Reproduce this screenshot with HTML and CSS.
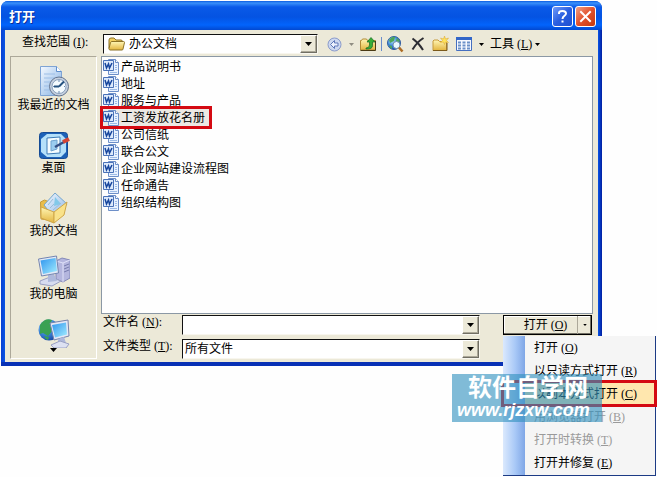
FILE: index.html
```
<!DOCTYPE html>
<html lang="zh-CN">
<head>
    <meta charset="UTF-8">
    <title>打开</title>
    <link rel="stylesheet" href="styles.css">
</head>
<body>
    <svg class="defs" aria-hidden="true">
        <defs>
            <linearGradient id="paper" x1="0" y1="0" x2="1" y2="1">
                <stop offset="0" stop-color="#f4f9ff"/>
                <stop offset="1" stop-color="#86b2e4"/>
            </linearGradient>
            <linearGradient id="screen" x1="0" y1="0" x2="1" y2="1">
                <stop offset="0" stop-color="#2f95ee"/>
                <stop offset="1" stop-color="#a4edff"/>
            </linearGradient>
            <linearGradient id="gold" x1="0" y1="0" x2="0" y2="1">
                <stop offset="0" stop-color="#fff6b5"/>
                <stop offset="1" stop-color="#e3b53f"/>
            </linearGradient>
            <radialGradient id="earth" cx="0.35" cy="0.3" r="0.8">
                <stop offset="0" stop-color="#b9ecff"/>
                <stop offset="0.5" stop-color="#3c86d8"/>
                <stop offset="1" stop-color="#123f9c"/>
            </radialGradient>
            <symbol id="word" viewBox="0 0 16 16">
                <path d="M5.500.5h7l3 3v12h-10z" fill="#e9f2ff" stroke="#6d8fc8"/>
                <path d="M12.500.5v3h3" fill="#fff" stroke="#6d8fc8"/>
                <path d="M12 6.500h2M12 8.500h2M12 10.500h2M7 13.500h7" stroke="#9dbbe6"/>
                <path d="M.5 1.500h10v10H.5z" fill="#dce9fb" stroke="#4a72b8"/>
                <path d="M2 4l1.500 5L5.500 5l1 4L9 4" fill="none" stroke="#17469d" stroke-width="1.500"/>
            </symbol>
            <symbol id="arrow" viewBox="0 0 7 4">
                <path d="M0 0h7L3.500 4z" fill="currentColor"/>
            </symbol>
        </defs>
    </svg>

    <div class="dialog">
        <div class="titlebar">
            <h1 class="title">打开</h1>
            <button class="caption-btn help" aria-label="帮助">
                <svg width="15" height="15" viewBox="0 0 15 15"><path d="M4 5V4q0-2 3.500-2T11 4.500C11 7 7.500 6.500 7.500 10M7.500 11.500v2" fill="none" stroke="#fff" stroke-width="2"/></svg>
            </button>
            <button class="caption-btn close" aria-label="关闭">
                <svg width="13" height="13" viewBox="0 0 13 13"><path d="M2 2l9 9M11 2l-9 9" stroke="#fff" stroke-width="2" stroke-linecap="square"/></svg>
            </button>
        </div>

        <div class="toolbar">
            <label class="lookin-label" for="lookin">查找范围<span class="key">(<u>I</u>):</span></label>
            <div class="combo lookin">
                <svg class="combo-icon" width="17" height="14" viewBox="0 0 17 14">
                    <path d="M1 11.500V3q0-2 2-2h3l2 2h5q1.500 0 1.500 2" fill="#f2cf60" stroke="#8c7226"/>
                    <path d="M1 11.500L2.500 5.500Q3 4.500 4 4.500h11.500q1 0 1 1l-1.500 6.500q0 1-1 1H2q-1 0-1-1.500z" fill="url(#gold)" stroke="#8c7226"/>
                </svg>
                <select id="lookin"><option>办公文档</option></select>
                <span class="combo-btn"><svg width="7" height="4"><use href="#arrow"/></svg></span>
            </div>
            <div class="tools">
                <button class="tool" aria-label="后退">
                    <svg width="15" height="15" viewBox="0 0 15 15">
                        <circle cx="7.500" cy="7.500" r="6.500" fill="#cdd8f0" stroke="#8a9bcb"/>
                        <path d="M3.500 7.500l4-4v2.500H11v3H7.500v2.500z" fill="#eef3ff" stroke="#6079ba"/>
                    </svg>
                </button>
                <button class="tool drop dim" aria-label="后退列表"><svg width="5" height="3"><use href="#arrow"/></svg></button>
                <button class="tool" aria-label="向上一级">
                    <svg width="16" height="16" viewBox="0 0 16 16">
                        <path d="M.5 14V4.500h1L2.500 3h4l1 1.500h8V14z" fill="url(#gold)" stroke="#b08a35"/>
                        <path d="M.5 14.500h15V5" fill="none" stroke="#493a15"/>
                        <path d="M6 12q3.500 0 3.500-3V6H7l4-4.500L15 6h-2.500v3.500q0 4-6.500 3.500z" fill="#36ad35" stroke="#126923" stroke-width=".7"/>
                    </svg>
                </button>
                <span class="sep"></span>
                <button class="tool" aria-label="搜索网页">
                    <svg width="17" height="17" viewBox="0 0 17 17">
                        <circle cx="7" cy="7" r="6.500" fill="url(#earth)" stroke="#315e9f"/>
                        <path d="M2 4q3-4 6-3L7 5 3 7zM10 2l3 3-2 2-2-2zM2 9l3 1v3q-2-1-3-4z" fill="#4ca65b"/>
                        <circle cx="9.500" cy="9" r="3.500" fill="#e8f8ff" stroke="#708eac"/>
                        <path d="M12 11.500l3.500 4" stroke="#ad6c24" stroke-width="2.500"/>
                    </svg>
                </button>
                <button class="tool" aria-label="删除">
                    <svg width="14" height="14" viewBox="0 0 14 14"><path d="M1.500 1.500Q8 6 12 13M12.500 1Q6 5 1.500 12.500" fill="none" stroke="#2d2d33" stroke-width="2"/></svg>
                </button>
                <button class="tool" aria-label="新建文件夹">
                    <svg width="17" height="16" viewBox="0 0 17 16">
                        <path d="M1 14.500V5l1-1h4l1.500 1.500h7v9z" fill="url(#gold)" stroke="#c79a3c"/>
                        <path d="M1 14.500h14V7" fill="none" stroke="#7b5a1b"/>
                        <path d="M12.500 0l1 3 3-1-2 2.500 2 2-3-.5-1 2.500-1-2.500-3 .5 2-2-2-2.500 3 1z" fill="#ffe45c" stroke="#dba52b" stroke-width=".5"/>
                    </svg>
                </button>
                <button class="tool" aria-label="视图">
                    <svg width="16" height="14" viewBox="0 0 16 14">
                        <path d="M.5.5h15v13H.5z" fill="#f6f9ff" stroke="#456fc0"/>
                        <path d="M0 0h16v3H0z" fill="#3266c8"/>
                        <path d="M2 5.500h12M2 8.500h12M2 11.500h12" stroke="#6a90c8" stroke-width="2" stroke-dasharray="3 1.500"/>
                    </svg>
                </button>
                <button class="tool drop" aria-label="视图列表"><svg width="5" height="3"><use href="#arrow"/></svg></button>
                <button class="tool menu-tool">工具<span class="key">(<u>L</u>)</span><svg width="5" height="3"><use href="#arrow"/></svg></button>
            </div>
        </div>

        <div class="content">
            <nav class="places">
                <button class="place">
                    <svg width="32" height="32" viewBox="0 0 32 32">
                        <path d="M2.500.5h16l5 5v24h-21z" fill="url(#paper)" stroke="#7fa4d4"/>
                        <path d="M18.500.5v5h5" fill="#fff" stroke="#5f8fcd"/>
                        <path d="M6 8h11M6 12h12M6 16h7M6 20h6M6 24h6" stroke="#9dbee6"/>
                        <circle cx="21" cy="20.500" r="9.500" fill="#c5d0df" stroke="#64758f"/>
                        <circle cx="21" cy="20.500" r="7" fill="#f4fbff" stroke="#8aa1bd"/>
                        <path d="M21 20.500l5-5M21 20.500h-5" stroke="#25527f" stroke-width="2"/>
                        <path d="M21 14v2M21 25v2M27 20.500h-1M16 20.500h-1" stroke="#6687ae"/>
                    </svg>
                    我最近的文档
                </button>
                <button class="place">
                    <svg width="32" height="32" viewBox="0 0 32 32">
                        <rect x="1.500" y="3.500" width="28" height="26" rx="3" fill="#1d62b8" stroke="#154b94"/>
                        <path d="M3 10l6-5h14l5 5v13l-5 5H9l-6-5z" fill="#b4e0fa"/>
                        <path d="M9 9l13-1v16l-13 1z" fill="#f4fcff" stroke="#3c7bb7"/>
                        <path d="M13 12l6-1v9l-6 2z" fill="#9bcdf0" stroke="#6fa3cf"/>
                        <path d="M17 18l9-5" stroke="#354f84" stroke-width="2.500"/>
                        <path d="M25 13l6-3" stroke="#d24536" stroke-width="4"/>
                    </svg>
                    桌面
                </button>
                <button class="place">
                    <svg width="32" height="32" viewBox="0 0 32 32">
                        <path d="M2.500 10l4-2 5 2 6 3v16L3 27z" fill="#e9bd4a" stroke="#c79c3a"/>
                        <path d="M6 13L17 1l12 11-12 15z" fill="url(#paper)" stroke="#75a6cd"/>
                        <path d="M17 5l6 7-7 2z" fill="#83c9e9"/>
                        <path d="M10 13l5-6M12 16l4-4M15 18l8-7" stroke="#9abdd7"/>
                        <path d="M3 15l13 5v11L3 26z" fill="url(#gold)" stroke="#d0a648"/>
                        <path d="M16 20l13-10-3 13-10 8z" fill="#f9e28a" stroke="#d0a648"/>
                    </svg>
                    我的文档
                </button>
                <button class="place">
                    <svg width="32" height="32" viewBox="0 0 32 32">
                        <path d="M18 6l6-3 8 2v18l-7 4-7-3z" fill="#b4b6de" stroke="#8388b8"/>
                        <path d="M18 6l7 2 7-3M25 8v19" fill="none" stroke="#dfe1f8"/>
                        <path d="M26 11l5-2M26 14l5-2M26 17l5-2" stroke="#777cad"/>
                        <path d="M2 26l10-4 11 4-9 5-12-2z" fill="#d7dcf0" stroke="#9aa0c4"/>
                        <path d="M10 20l6-1 3 7-9 1z" fill="#aeb9dc"/>
                        <path d="M.5 4l18-3 2 17-17 3z" fill="#e3e9f6" stroke="#7485b0"/>
                        <path d="M2.500 5.500l15-2.500 1.500 13-14 3z" fill="url(#screen)"/>
                    </svg>
                    我的电脑
                </button>
                <button class="place network" aria-label="网上邻居">
                    <svg width="32" height="30" viewBox="0 0 32 30">
                        <circle cx="11" cy="12" r="10.500" fill="url(#earth)"/>
                        <path d="M2 7q5-8 12-5l-2 5 3 5-5 6-5-3-3 1zM6 18l5 1-1 3q-3-1-4-4z" fill="#3aa153"/>
                        <path d="M12 5l18-3 1 16-15 4z" fill="#e5e8f6" stroke="#7682aa"/>
                        <path d="M14 7l14-2.500 1 12-12 3z" fill="url(#screen)"/>
                        <path d="M20 21l6-2 2 6h-8z" fill="#aeb8db"/>
                        <path d="M13 27l9-4 9 3-3 4h-12z" fill="#dde1f2" stroke="#9aa0c4"/>
                    </svg>
                    <svg width="7" height="4"><use href="#arrow"/></svg>
                </button>
            </nav>

            <div class="main">
                <ul class="files">
                    <li class="file"><svg width="16" height="16"><use href="#word"/></svg>产品说明书</li>
                    <li class="file"><svg width="16" height="16"><use href="#word"/></svg>地址</li>
                    <li class="file"><svg width="16" height="16"><use href="#word"/></svg>服务与产品</li>
                    <li class="file marked"><svg width="16" height="16"><use href="#word"/></svg>工资发放花名册</li>
                    <li class="file"><svg width="16" height="16"><use href="#word"/></svg>公司信纸</li>
                    <li class="file"><svg width="16" height="16"><use href="#word"/></svg>联合公文</li>
                    <li class="file"><svg width="16" height="16"><use href="#word"/></svg>企业网站建设流程图</li>
                    <li class="file"><svg width="16" height="16"><use href="#word"/></svg>任命通告</li>
                    <li class="file"><svg width="16" height="16"><use href="#word"/></svg>组织结构图</li>
                </ul>

                <div class="form">
                    <label for="filename">文件名<span class="key">(<u>N</u>):</span></label>
                    <div class="combo">
                        <input type="text" id="filename">
                        <button class="combo-btn" aria-label="最近的文件名"><svg width="7" height="4"><use href="#arrow"/></svg></button>
                    </div>
                    <div class="open-group">
                        <button class="open-btn">打开<span class="key">(<u>O</u>)</span></button>
                        <button class="open-drop" aria-label="打开方式"><svg width="4" height="2"><use href="#arrow"/></svg></button>
                        <div class="open-menu">
                            <button class="menu-item">打开<span class="key">(<u>O</u>)</span></button>
                            <button class="menu-item">以只读方式打开<span class="key">(<u>R</u>)</span></button>
                            <button class="menu-item active">以副本方式打开<span class="key">(<u>C</u>)</span></button>
                            <button class="menu-item" disabled>用浏览器打开<span class="key">(<u>B</u>)</span></button>
                            <button class="menu-item" disabled>打开时转换<span class="key">(<u>T</u>)</span></button>
                            <button class="menu-item">打开并修复<span class="key">(<u>E</u>)</span></button>
                        </div>
                        <div class="watermark">
                            <span class="site-name">软件自学网</span>
                            <span class="site-url">www.rjzxw.com</span>
                        </div>
                    </div>
                    <label for="filetype">文件类型<span class="key">(<u>T</u>):</span></label>
                    <div class="combo">
                        <select id="filetype"><option>所有文件</option></select>
                        <span class="combo-btn"><svg width="7" height="4"><use href="#arrow"/></svg></span>
                    </div>
                </div>
            </div>
        </div>
    </div>
</body>
</html>
```
FILE: styles.css
```
* {
    box-sizing: border-box;
}
body {
    min-height: 100vh;
    margin: 0;
    padding: 1px 55px 0 1px;
    background: #fefefe;
    color: #000;
    font-family: "Liberation Sans", "Noto Sans CJK SC", sans-serif;
    font-size: 12px;
    line-height: 16px;
}
button, input, select {
    margin: 0;
    padding: 0;
    border: none;
    border-radius: 0;
    background: none;
    color: inherit;
    font: inherit;
}
svg {
    display: block;
    flex: none;
}
.defs {
    position: absolute;
    width: 0;
    height: 0;
}
.key {
    margin-left: 3px;
    font-family: "Liberation Serif", serif;
}

.dialog {
    padding: 0 4px 4px;
    border-radius: 7px 7px 0 0;
    background: linear-gradient(90deg, #0a3fd0, #0a55e6 4px, #0a55e6 calc(100% - 4px), #001ea0);
    box-shadow: inset 0 -4px #0831b5;
}
.titlebar {
    display: flex;
    align-items: center;
    gap: 2px;
    height: 29px;
    margin: 0 -4px;
    padding: 2px 6px 0 8px;
    border-radius: 7px 7px 0 0;
    background: linear-gradient(#0a5be0, #3a91fa 2px, #0a5ae8 6px, #0453e2 16px, #0264fc 24px, #0248d0);
}
.title {
    flex: 1;
    margin: 0;
    color: #fff;
    font-size: 13px;
    font-weight: bold;
    text-shadow: 1px 1px #0b2f9a;
}
.caption-btn {
    display: flex;
    align-items: center;
    justify-content: center;
    width: 21px;
    height: 21px;
    border: 1px solid #fff;
    border-radius: 3px;
}
.help {
    background: linear-gradient(135deg, #6f9bfa, #2a5fe0 50%, #1f4fd0);
}
.close {
    background: linear-gradient(135deg, #f0a085, #e2512c 50%, #c5390f);
}

.toolbar {
    display: flex;
    align-items: center;
    height: 26px;
    padding: 2px 5px 0 17px;
    background: #ece9d8;
}
.lookin-label {
    width: 81px;
    padding-bottom: 4px;
}
.combo {
    display: flex;
    height: 20px;
    border: 1px solid;
    border-color: #111 #f8f6ee #f8f6ee #111;
    background: #fff;
}
.combo input,
.combo select {
    flex: 1;
    min-width: 0;
    padding: 0 2px;
    appearance: none;
    outline: none;
}
.combo-btn {
    display: flex;
    align-items: center;
    justify-content: center;
    width: 17px;
    border: 1px solid;
    border-color: #fff #716f64 #716f64 #fff;
    background: #ece9d8;
    box-shadow: inset -1px -1px #aca899;
}
.lookin {
    flex: 1;
    max-width: 215px;
}
.combo-icon {
    margin: 2px 2px 0 4px;
}
.tools {
    display: flex;
    align-items: center;
    gap: 7px;
    padding-left: 9px;
}
.tool {
    display: flex;
    align-items: center;
}
.drop {
    margin-right: -1px;
}
.dim {
    color: #8f8d82;
}
.sep {
    width: 1px;
    height: 14px;
    margin: 0 -2px;
    background: #6a8ccb;
}
.menu-tool svg {
    margin-left: 3px;
}

.content {
    display: flex;
    gap: 4px;
    padding: 0 5px 3px;
    background: #ece9d8;
}
.places {
    display: flex;
    flex-direction: column;
    flex: none;
    width: 87px;
    padding-top: 9px;
    border: 1px solid;
    border-color: #aca899 #fff #fff #aca899;
}
.place {
    display: flex;
    flex-direction: column;
    align-items: center;
    height: 63px;
    line-height: 14px;
}
.network {
    height: 38px;
}
.main {
    flex: 1;
    min-width: 0;
}
.files {
    height: 258px;
    margin: 0;
    padding: 1px;
    border: 1px solid #8b98a5;
    background: #fefefe;
    list-style: none;
}
.file {
    display: flex;
    align-items: center;
    gap: 2px;
    width: max-content;
    height: 17px;
}
.marked {
    padding-right: 4px;
    outline: 3px solid #d40a12;
    background: #ece9e4;
}
.form {
    display: grid;
    grid-template-columns: 77px 1fr 89px;
    row-gap: 4px;
    padding: 1px 1px 0;
}
.form label {
    padding-left: 1px;
    line-height: 15px;
}
.form .combo {
    margin-left: 3px;
    margin-right: 23px;
}

.open-group {
    position: relative;
    display: flex;
    height: 20px;
    border: 1px solid #000;
    box-shadow: inset -1px -1px #716f64, inset 1px 1px #fff;
}
.open-btn {
    flex: 1;
    padding-left: 10px;
}
.open-drop {
    display: flex;
    align-items: center;
    justify-content: center;
    width: 14px;
    border-left: 1px solid #aca899;
}
.open-menu {
    position: absolute;
    top: 20px;
    left: -1px;
    width: 153px;
    padding-bottom: 1px;
    border: solid #1c3b85;
    border-width: 0 1px 1px 0;
    background: linear-gradient(90deg, #dbe9fd, #a9c9f7 12px, #7fa6e6 22px, #f5f5f5 22px);
}
.menu-item {
    display: block;
    width: 100%;
    height: 23px;
    padding-left: 31px;
    text-align: left;
}
.menu-item:disabled {
    color: #9a9a9a;
}
.active {
    outline: 3px solid #d40a12;
    outline-offset: -1px;
    background: linear-gradient(90deg, #dbe9fd, #a9c9f7 12px, #7fa6e6 22px, #ffe7ae 22px);
}
.watermark {
    position: absolute;
    top: 58px;
    left: -52px;
    width: 150px;
    height: 48px;
    padding-top: 1px;
    background: rgba(50, 145, 190, 0.62);
    color: #fff;
    font-weight: bold;
    pointer-events: none;
}
.site-name,
.site-url {
    display: block;
}
.site-name {
    padding-left: 16px;
    font-size: 24px;
    line-height: 26px;
}
.site-url {
    padding-left: 5px;
    font-size: 18px;
    font-style: italic;
    line-height: 18px;
}
```
